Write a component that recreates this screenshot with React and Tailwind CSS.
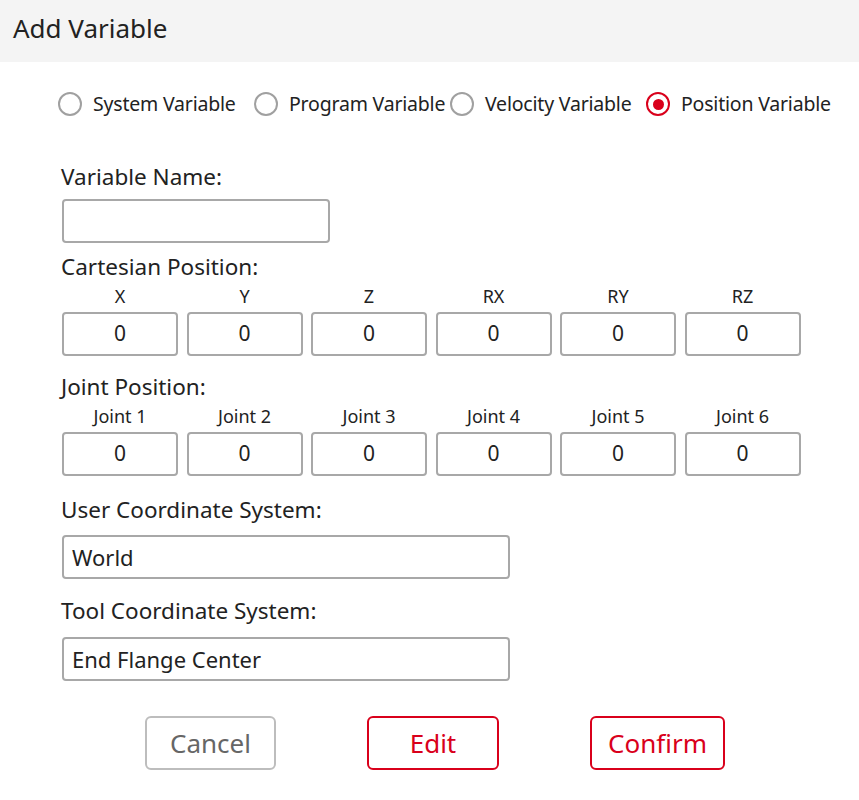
import React, { useState } from 'react';

const cartesian = ['X', 'Y', 'Z', 'RX', 'RY', 'RZ'];
const joints = ['Joint 1', 'Joint 2', 'Joint 3', 'Joint 4', 'Joint 5', 'Joint 6'];
const types = ['System Variable', 'Program Variable', 'Velocity Variable', 'Position Variable'];

function Radio({ label, checked, onClick }) {
  return (
    <button type="button" onClick={onClick} className="w-[196px] shrink-0 flex items-center gap-[11px]">
      <span className={`w-[24px] h-[24px] shrink-0 rounded-full border-[2.5px] flex items-center justify-center ${checked ? 'border-[#d9001b]' : 'border-[#a0a0a0]'}`}>
        {checked && <span className="w-[11px] h-[11px] rounded-full bg-[#d9001b]" />}
      </span>
      <span className="text-[19.5px] whitespace-nowrap tracking-[-0.2px] text-[#222]">{label}</span>
    </button>
  );
}

function AxisRow({ labels }) {
  return (
    <div className="flex gap-[8.5px]">
      {labels.map((l) => (
        <div key={l} className="flex flex-col items-center w-[116px]">
          <div className="text-[18px] leading-[24px] text-[#222]">{l}</div>
          <div className="mt-[4px] w-full h-[44px] border-2 border-[#a8a8a8] rounded-[4px] flex items-center justify-center text-[21px] text-[#222]">0</div>
        </div>
      ))}
    </div>
  );
}

export default function App() {
  const [type, setType] = useState('Position Variable');
  const label = 'text-[22.5px] leading-[30px] text-[#222] -ml-[1px]';
  const field = 'w-[448px] h-[44px] border-2 border-[#a8a8a8] rounded-[4px] flex items-center px-[8px] text-[22px] text-[#222]';

  return (
    <div className="w-[859px] h-[800px] bg-white" style={{ fontFamily: '"Noto Sans", "Open Sans", sans-serif' }}>
      <div className="h-[62px] bg-[#f4f4f4] flex items-center px-[13px]">
        <h1 className="text-[26px] text-[#222] -mt-[6px]">Add Variable</h1>
      </div>

      <div className="flex pl-[58px] mt-[29px] h-[26px] items-center">
        {types.map((t) => (
          <Radio key={t} label={t} checked={type === t} onClick={() => setType(t)} />
        ))}
      </div>

      <div className="pl-[62px] mt-[45px] flex flex-col">
        <div className={label}>Variable Name:</div>
        <div className="mt-[7px] w-[268px] h-[44px] border-2 border-[#a8a8a8] rounded-[4px]" />

        <div className={`mt-[9px] ${label}`}>Cartesian Position:</div>
        <div className="mt-[2px]">
          <AxisRow labels={cartesian} />
        </div>

        <div className={`mt-[16px] ${label}`}>Joint Position:</div>
        <div className="mt-[2px]">
          <AxisRow labels={joints} />
        </div>

        <div className={`mt-[19px] ${label}`}>User Coordinate System:</div>
        <div className={`mt-[10px] ${field}`}>World</div>

        <div className={`mt-[17px] ${label}`}>Tool Coordinate System:</div>
        <div className={`mt-[11px] ${field}`}>End Flange Center</div>
      </div>

      <div className="flex pl-[145px] mt-[35px] text-[26px]">
        <button type="button" className="w-[131px] h-[54px] border-2 border-[#bdbdbd] rounded-[6px] text-[#666]">Cancel</button>
        <button type="button" className="ml-[91px] w-[132px] h-[54px] border-2 border-[#d9001b] rounded-[6px] text-[#d9001b]">Edit</button>
        <button type="button" className="ml-[91px] w-[135px] h-[54px] border-2 border-[#d9001b] rounded-[6px] text-[#d9001b]">Confirm</button>
      </div>
    </div>
  );
}
